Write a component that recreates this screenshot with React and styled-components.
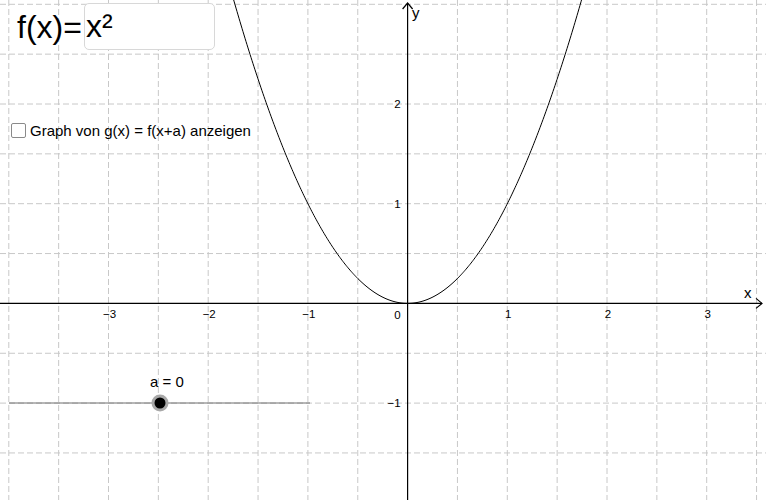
import React from 'react'
import styled, { createGlobalStyle } from 'styled-components'

const GlobalStyle = createGlobalStyle`
  html, body {
    margin: 0;
    padding: 0;
    background: #ffffff;
  }
  body {
    font-family: "Liberation Sans", Arial, sans-serif;
  }
`

const W = 766
const H = 500
const OX = 407.6
const OY = 303.4
const UNIT = 99.7

const toX = (v) => OX + v * UNIT
const toY = (v) => OY - v * UNIT

const Applet = styled.div`
  position: relative;
  width: ${W}px;
  height: ${H}px;
  overflow: hidden;
  background: #fff;
`

const Board = styled.svg`
  display: block;
  font-family: "Liberation Sans", Arial, sans-serif;
`

const InputRow = styled.div`
  position: absolute;
  left: 17px;
  top: 3px;
  display: flex;
  align-items: center;
  gap: 2px;
`

const FuncLabel = styled.span`
  font-size: 32px;
  color: #000;
  line-height: 1;
`

const InputBox = styled.div`
  box-sizing: border-box;
  width: 131px;
  height: 47px;
  border: 1px solid #d8d8d8;
  border-radius: 5px;
  background: #fff;
  display: flex;
  align-items: center;
  padding-left: 1px;
  font-size: 32px;
  color: #000;
`

const CheckRow = styled.label`
  position: absolute;
  left: 11px;
  top: 122px;
  display: flex;
  align-items: center;
  gap: 4px;
  font-size: 15px;
  color: #000;
`

const CheckBox = styled.span`
  box-sizing: border-box;
  width: 15px;
  height: 15px;
  border: 1.5px solid #8a8a8a;
  border-radius: 2px;
  background: #fff;
`

function Grid() {
  const lines = []
  const step = UNIT / 2
  for (let k = -10; k <= 10; k++) {
    const x = OX + k * step
    if (k !== 0 && x > 0 && x < W) {
      lines.push(<line key={'v' + k} x1={x} y1={0} x2={x} y2={H} />)
    }
    const y = OY + k * step
    if (k !== 0 && y > 0 && y < H) {
      lines.push(<line key={'h' + k} x1={0} y1={y} x2={W} y2={y} />)
    }
  }
  return (
    <g stroke="#c8c8c8" strokeWidth="1" strokeDasharray="6 3">
      {lines}
    </g>
  )
}

function parabola() {
  const pts = []
  for (let px = 200; px <= 620; px += 1) {
    const v = (px - OX) / UNIT
    const py = toY(v * v)
    pts.push(`${px},${py.toFixed(2)}`)
  }
  return pts.join(' ')
}

export default function App() {
  const xTicks = [-3, -2, -1, 1, 2, 3]
  const yTicks = [-1, 1, 2]
  const sliderX = 160

  return (
    <Applet>
      <GlobalStyle />
      <Board width={W} height={H} viewBox={`0 0 ${W} ${H}`}>
        <Grid />
        {/* axes */}
        <g stroke="#000" strokeWidth="1.2" fill="none">
          <line x1={0} y1={OY} x2={W - 4} y2={OY} />
          <line x1={OX} y1={H} x2={OX} y2={3} />
          <polyline points={`${W - 10},${OY - 5} ${W - 4},${OY} ${W - 10},${OY + 5}`} />
          <polyline points={`${OX - 5},${9} ${OX},${3} ${OX + 5},${9}`} />
        </g>
        <g fontSize="11.5" fill="#000">
          {xTicks.map((t) => (
            <text key={t} x={toX(t) + 1} y={OY + 15} textAnchor="middle">
              {t < 0 ? '\u2212' + Math.abs(t) : t}
            </text>
          ))}
          {yTicks.map((t) => (
            <text key={t} x={OX - 7} y={toY(t) + 4} textAnchor="end">
              {t < 0 ? '\u2212' + Math.abs(t) : t}
            </text>
          ))}
          <text x={OX - 7} y={OY + 16} textAnchor="end">0</text>
        </g>
        <g fontSize="15" fill="#000">
          <text x={744} y={298}>x</text>
          <text x={412} y={18}>y</text>
        </g>
        <polyline points={parabola()} fill="none" stroke="#000" strokeWidth="1" />
        {/* slider */}
        <line x1={9} y1={403} x2={310} y2={403} stroke="#6e6e6e" strokeWidth="1" />
        <circle cx={sliderX} cy={403} r={8.5} fill="#a8a8a8" />
        <circle cx={sliderX} cy={403} r={5.5} fill="#000" />
        <text x={167} y={387} fontSize="15" textAnchor="middle" fill="#000">a = 0</text>
      </Board>
      <InputRow>
        <FuncLabel>f(x)=</FuncLabel>
        <InputBox>x²</InputBox>
      </InputRow>
      <CheckRow>
        <CheckBox />
        Graph von g(x) = f(x+a) anzeigen
      </CheckRow>
    </Applet>
  )
}
